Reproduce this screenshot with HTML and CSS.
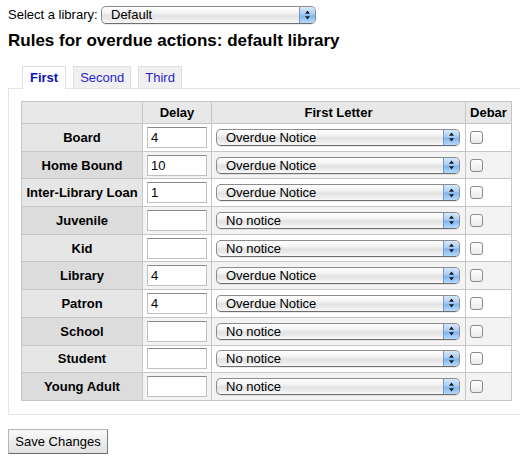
FILE: index.html
```html
<!DOCTYPE html>
<html>
<head>
<meta charset="utf-8">
<link rel="stylesheet" href="styles.css">
</head>
<body>
<div class="libsel">
  <label class="libsel-label">Select a library:</label>
  <span class="sel sel-lib"><span class="sel-text">Default</span><span class="sel-arrow"><svg width="7" height="10" viewBox="0 0 7 10"><path d="M3.5 0.5 L6 3.8 L1 3.8 Z M3.5 9.5 L6 6.2 L1 6.2 Z" fill="#1a1a1a"/></svg></span></span>
</div>
<h1 class="title">Rules for overdue actions: default library</h1>
<div class="tabs">
  <ul class="tab-list">
    <li class="tab active">First</li>
    <li class="tab">Second</li>
    <li class="tab">Third</li>
  </ul>
  <div class="panel">
    <table class="rules">
      <thead>
        <tr><th class="c-cat"></th><th class="c-delay">Delay</th><th class="c-letter">First Letter</th><th class="c-debar">Debar</th></tr>
      </thead>
      <tbody>
        <tr class="odd"><th>Board</th><td><span class="txt">4</span></td><td><span class="sel sel-row"><span class="sel-text">Overdue Notice</span><span class="sel-arrow"><svg width="7" height="10" viewBox="0 0 7 10"><path d="M3.5 0.5 L6 3.8 L1 3.8 Z M3.5 9.5 L6 6.2 L1 6.2 Z" fill="#1a1a1a"/></svg></span></span></td><td><span class="chk"></span></td></tr>
        <tr class="even"><th>Home Bound</th><td><span class="txt">10</span></td><td><span class="sel sel-row"><span class="sel-text">Overdue Notice</span><span class="sel-arrow"><svg width="7" height="10" viewBox="0 0 7 10"><path d="M3.5 0.5 L6 3.8 L1 3.8 Z M3.5 9.5 L6 6.2 L1 6.2 Z" fill="#1a1a1a"/></svg></span></span></td><td><span class="chk"></span></td></tr>
        <tr class="odd"><th>Inter-Library Loan</th><td><span class="txt">1</span></td><td><span class="sel sel-row"><span class="sel-text">Overdue Notice</span><span class="sel-arrow"><svg width="7" height="10" viewBox="0 0 7 10"><path d="M3.5 0.5 L6 3.8 L1 3.8 Z M3.5 9.5 L6 6.2 L1 6.2 Z" fill="#1a1a1a"/></svg></span></span></td><td><span class="chk"></span></td></tr>
        <tr class="even"><th>Juvenile</th><td><span class="txt"></span></td><td><span class="sel sel-row"><span class="sel-text">No notice</span><span class="sel-arrow"><svg width="7" height="10" viewBox="0 0 7 10"><path d="M3.5 0.5 L6 3.8 L1 3.8 Z M3.5 9.5 L6 6.2 L1 6.2 Z" fill="#1a1a1a"/></svg></span></span></td><td><span class="chk"></span></td></tr>
        <tr class="odd"><th>Kid</th><td><span class="txt"></span></td><td><span class="sel sel-row"><span class="sel-text">No notice</span><span class="sel-arrow"><svg width="7" height="10" viewBox="0 0 7 10"><path d="M3.5 0.5 L6 3.8 L1 3.8 Z M3.5 9.5 L6 6.2 L1 6.2 Z" fill="#1a1a1a"/></svg></span></span></td><td><span class="chk"></span></td></tr>
        <tr class="even"><th>Library</th><td><span class="txt">4</span></td><td><span class="sel sel-row"><span class="sel-text">Overdue Notice</span><span class="sel-arrow"><svg width="7" height="10" viewBox="0 0 7 10"><path d="M3.5 0.5 L6 3.8 L1 3.8 Z M3.5 9.5 L6 6.2 L1 6.2 Z" fill="#1a1a1a"/></svg></span></span></td><td><span class="chk"></span></td></tr>
        <tr class="odd"><th>Patron</th><td><span class="txt">4</span></td><td><span class="sel sel-row"><span class="sel-text">Overdue Notice</span><span class="sel-arrow"><svg width="7" height="10" viewBox="0 0 7 10"><path d="M3.5 0.5 L6 3.8 L1 3.8 Z M3.5 9.5 L6 6.2 L1 6.2 Z" fill="#1a1a1a"/></svg></span></span></td><td><span class="chk"></span></td></tr>
        <tr class="even"><th>School</th><td><span class="txt"></span></td><td><span class="sel sel-row"><span class="sel-text">No notice</span><span class="sel-arrow"><svg width="7" height="10" viewBox="0 0 7 10"><path d="M3.5 0.5 L6 3.8 L1 3.8 Z M3.5 9.5 L6 6.2 L1 6.2 Z" fill="#1a1a1a"/></svg></span></span></td><td><span class="chk"></span></td></tr>
        <tr class="odd"><th>Student</th><td><span class="txt"></span></td><td><span class="sel sel-row"><span class="sel-text">No notice</span><span class="sel-arrow"><svg width="7" height="10" viewBox="0 0 7 10"><path d="M3.5 0.5 L6 3.8 L1 3.8 Z M3.5 9.5 L6 6.2 L1 6.2 Z" fill="#1a1a1a"/></svg></span></span></td><td><span class="chk"></span></td></tr>
        <tr class="even"><th>Young Adult</th><td><span class="txt"></span></td><td><span class="sel sel-row"><span class="sel-text">No notice</span><span class="sel-arrow"><svg width="7" height="10" viewBox="0 0 7 10"><path d="M3.5 0.5 L6 3.8 L1 3.8 Z M3.5 9.5 L6 6.2 L1 6.2 Z" fill="#1a1a1a"/></svg></span></span></td><td><span class="chk"></span></td></tr>
      </tbody>
    </table>
  </div>
</div>
<div class="actions"><span class="btn">Save Changes</span></div>
</body>
</html>
```

FILE: styles.css
```css
html, body {
  margin: 0;
  overflow: hidden;
}
body {
  font-family: "Liberation Sans", Arial, sans-serif;
  font-size: 13px;
  color: #000;
  padding: 6px 0 0 8px;
  background: #fff;
}
.libsel {
  display: flex;
  align-items: center;
  height: 18px;
}
.libsel-label {
  width: 93px;
  line-height: 18px;
}
.sel {
  display: flex;
  align-items: stretch;
  box-sizing: border-box;
  border: 1px solid #8c8c8c;
  border-bottom-color: #6e6e6e;
  border-radius: 5px;
  background: linear-gradient(#ffffff 0%, #f4f4f4 35%, #e2e2e2 55%, #ececec 80%, #fafafa 100%);
  overflow: hidden;
  box-shadow: 0 1px 0 rgba(0,0,0,0.08);
}
.sel-lib {
  width: 215px;
  height: 18px;
}
.sel-row {
  width: 244px;
  height: 17px;
}
.sel-text {
  flex: 1;
  padding-left: 9px;
  line-height: 15px;
  font-size: 13px;
  white-space: nowrap;
}
.sel-lib .sel-text {
  line-height: 16px;
}
.sel-arrow {
  width: 15px;
  display: flex;
  align-items: center;
  justify-content: center;
  border-left: 1px solid #7c95c8;
  background: linear-gradient(#d6e8fb 0%, #a9cdf4 45%, #7fb5ee 55%, #b6dafc 100%);
}
.title {
  font-size: 17px;
  font-weight: bold;
  line-height: 20px;
  margin: 7px 0 0;
}
.tabs {
  margin-top: 15px;
}
.tab-list {
  list-style: none;
  margin: 0;
  padding: 0 0 0 14px;
  display: flex;
  gap: 7px;
}
.tab {
  box-sizing: border-box;
  height: 22px;
  line-height: 21px;
  padding: 0 6px;
  border: 1px solid #e0e0e0;
  border-bottom: none;
  background: #f0f0f0;
  color: #2a1fd0;
  font-size: 13px;
}
.tab.active {
  background: #fff;
  color: #0c10b8;
  font-weight: bold;
  height: 23px;
  padding: 0 7px;
  margin-bottom: -1px;
  position: relative;
  z-index: 1;
}
.panel {
  width: 560px;
  border: 1px solid #e4e4e4;
  padding: 12px 0 13px 12px;
  background: #fff;
}
.rules {
  border-collapse: collapse;
  border: 1px solid #bcbcbc;
  width: 490px;
  table-layout: fixed;
}
.rules th, .rules td {
  border: 1px solid #c6c6c6;
  padding: 0;
}
.rules thead th {
  background: #e8e8e8;
  height: 21px;
  font-weight: bold;
  text-align: center;
  font-size: 13px;
}
.c-cat { width: 120px; }
.c-delay { width: 68px; }
.c-letter { width: 253px; }
.c-debar { width: 45px; }
.rules tbody th {
  font-weight: bold;
  text-align: center;
  height: 26.7px;
  white-space: nowrap;
}
.rules tbody tr.odd th { background: #e6e6e6; }
.rules tbody tr.even th { background: #dcdcdc; }
.rules tbody tr.odd td { background: #fff; }
.rules tbody tr.even td { background: #f3f3f3; }
.rules td:nth-of-type(1) { padding-left: 4px; }
.rules td:nth-of-type(2) { padding-left: 4px; }
.rules td:nth-of-type(3) { padding-left: 4px; }
.txt {
  display: block;
  box-sizing: border-box;
  width: 60px;
  height: 21px;
  border: 1px solid #c0c0c0;
  border-top-color: #8a8a8a;
  background: #fff;
  padding-left: 3px;
  line-height: 19px;
  font-size: 13px;
}
.chk {
  display: block;
  box-sizing: border-box;
  width: 13px;
  height: 13px;
  border: 1px solid #8a8a8a;
  border-radius: 3px;
  background: linear-gradient(#ffffff, #eaeaea);
}
.actions {
  margin-top: 14px;
}
.btn {
  display: inline-block;
  box-sizing: border-box;
  width: 100px;
  height: 25px;
  line-height: 23px;
  text-align: center;
  font-size: 13px;
  border: 1px solid #b4b4b4;
  border-right-color: #7a7a7a;
  border-bottom-color: #6a6a6a;
  background: linear-gradient(#fafafa, #ececec 50%, #e2e2e2);
}
```
